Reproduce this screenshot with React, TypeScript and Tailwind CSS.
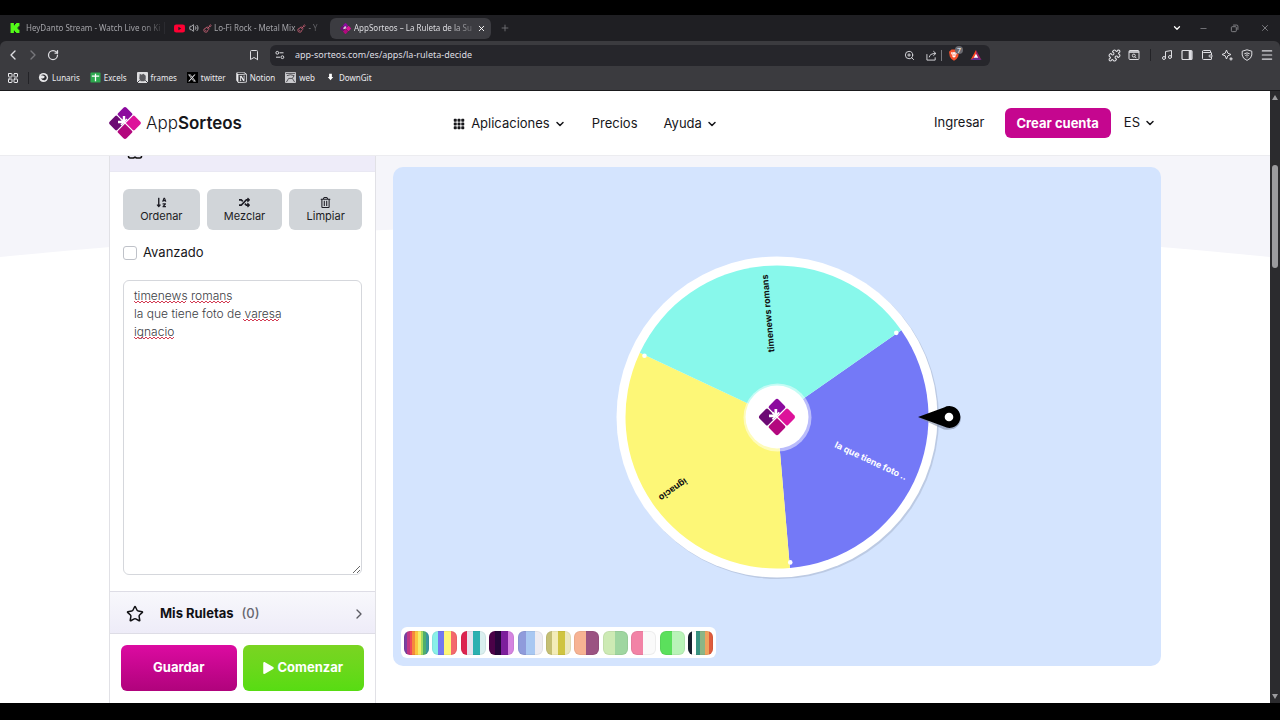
import type { ReactNode } from "react";
import {
  Bookmark,
  ChevronDown,
  ChevronLeft,
  ChevronRight,
  Guitar,
  LayoutGrid,
  Menu,
  Minus,
  Music,
  Plus,
  Puzzle,
  RotateCw,
  Star,
  Volume2,
  Wallet,
  X,
  ZoomIn,
} from "lucide-react";
import { BsGrid3X3GapFill } from "react-icons/bs";
import { FaPlay, FaRandom, FaRegTrashAlt, FaSortAlphaDown } from "react-icons/fa";
import { SiKick, SiNotion, SiX, SiYoutube } from "react-icons/si";

interface Segment {
  label: string;
  color: string;
  textColor: string;
  start: number;
}

const SEGMENTS: Segment[] = [
  { label: "la que tiene foto ..", color: "#7479f7", textColor: "#ffffff", start: -34.9 },
  { label: "ignacio", color: "#fdf777", textColor: "#111111", start: 85.1 },
  { label: "timenews romans", color: "#88f8eb", textColor: "#111111", start: 205.1 },
];

const PALETTES: string[][] = [
  ["#7b3fa0", "#c13584", "#ef4a5b", "#f58a3c", "#fbc740", "#f4ef6a", "#a6dc60", "#4fae6c", "#3a97a0"],
  ["#88f0e8", "#7479f0", "#fdf777", "#f4686c"],
  ["#dc2350", "#e6e3ee", "#2cb0b0", "#d9efef"],
  ["#4b0248", "#26063a", "#7d1f9c", "#d583e0"],
  ["#8f9bdb", "#a9c8f2", "#eeecf2"],
  ["#c5bf74", "#f3ecb8", "#cfc441", "#ece8bf"],
  ["#f7b393", "#9b5382"],
  ["#cdeab4", "#9fd6a0"],
  ["#f283a6", "#fafafa"],
  ["#5be05c", "#b9f3b8"],
  ["#17202e", "#ffffff", "#399382", "#8cb586", "#f0a25e", "#df5c3e"],
];

const ENTRIES = "timenews romans\nla que tiene foto de varesa\nignacio";

// Spell-check marks, measured from the text area's corner
const MISSPELLED = [
  { x: 11, y: 21, width: 52 },
  { x: 67, y: 21, width: 40 },
  { x: 120, y: 39, width: 36 },
  { x: 11, y: 57, width: 40 },
];

function point(angle: number, r: number) {
  const rad = (angle * Math.PI) / 180;
  return { x: r * Math.cos(rad), y: r * Math.sin(rad) };
}

function slicePath(start: number, r: number) {
  const a = point(start, r);
  const b = point(start + 120, r);
  return `M0 0L${a.x} ${a.y}A${r} ${r} 0 0 1 ${b.x} ${b.y}Z`;
}

function squiggle(x: number, y: number, width: number) {
  let d = `M${x} ${y}`;
  for (let i = 2; i <= width; i += 2) {
    d += `L${x + i} ${y + (i % 4 ? 2 : 0)}`;
  }
  return d;
}

function stripes(colors: string[]) {
  const step = 100 / colors.length;
  const stops = colors.map((c, i) => `${c} ${i * step}% ${(i + 1) * step}%`);
  return `linear-gradient(to right, ${stops.join(", ")})`;
}

function LogoShapes() {
  return (
    <>
      <g transform="rotate(45)">
        <path d="M-9.6 -11.8H-2Q-0.6 -11.8 -0.6 -10.4V-0.6H-10.4Q-11.8 -0.6 -11.8 -2V-9.6Q-11.8 -11.8 -9.6 -11.8Z" fill="#8c0a9e" />
        <path d="M9.6 -11.8H2Q0.6 -11.8 0.6 -10.4V-0.6H10.4Q11.8 -0.6 11.8 -2V-9.6Q11.8 -11.8 9.6 -11.8Z" fill="#dd129a" />
        <path d="M9.6 11.8H2Q0.6 11.8 0.6 10.4V0.6H10.4Q11.8 0.6 11.8 2V9.6Q11.8 11.8 9.6 11.8Z" fill="#b3087e" />
        <path d="M-9.6 11.8H-2Q-0.6 11.8 -0.6 10.4V0.6H-10.4Q-11.8 0.6 -11.8 2V9.6Q-11.8 11.8 -9.6 11.8Z" fill="#6c0a74" />
      </g>
      <path d="M-1 -0.5V-7M-0.5 -1H-7" stroke="#fff" strokeWidth="2.4" fill="none" />
      <path d="M-1 -1L-4 -4M-1 -1L2 -4M-1 -1L-4 2" stroke="#fff" strokeWidth="1.6" fill="none" />
    </>
  );
}

function Logo({ className }: { className: string }) {
  return (
    <svg viewBox="-16 -16 32 32" className={className} aria-hidden="true">
      <LogoShapes />
    </svg>
  );
}

function IconButton({ label, children }: { label: string; children: ReactNode }) {
  return (
    <button type="button" aria-label={label} className="flex h-3 w-3 shrink-0 items-center justify-center">
      {children}
    </button>
  );
}

function TabStrip() {
  return (
    <div className="flex h-[26px] items-center whitespace-nowrap bg-[#1f1f23] text-[8px] leading-3 text-[#a3a3a8]">
      <div className="flex w-[165px] items-center gap-[6px] border-r border-[#2b2b30] pl-[10px]">
        <SiKick className="h-[10px] w-[10px] shrink-0 text-[#53fc18]" />
        <span className="[mask-image:linear-gradient(to_right,#000_85%,#0004)]">
          HeyDanto Stream - Watch Live on Ki
        </span>
      </div>
      <div className="flex w-[165px] items-center gap-1 pl-[9px]">
        <SiYoutube className="h-[11px] w-[11px] shrink-0 text-[#ff0033]" />
        <Volume2 className="h-[10px] w-[10px] shrink-0 text-[#d0d0d4]" />
        <span className="flex items-center gap-[2px] [mask-image:linear-gradient(to_right,#000_85%,#0006)]">
          <Guitar className="h-[9px] w-[9px] shrink-0 text-[#d8687e]" />
          <span>Lo-Fi Rock - Metal Mix</span>
          <Guitar className="h-[9px] w-[9px] shrink-0 text-[#d8687e]" />
          <span>- Y</span>
        </span>
      </div>
      <div className="flex h-[21px] w-[161px] items-center justify-between rounded-md bg-[#3c3c41] pl-[10px] pr-1 text-[#dcdce0]">
        <span className="flex items-center gap-[3px]">
          <Logo className="h-[11px] w-[11px] shrink-0" />
          <span className="[mask-image:linear-gradient(to_right,#000_80%,#0004)]">
            AppSorteos – La Ruleta de la Su
          </span>
        </span>
        <IconButton label="Cerrar pestaña">
          <X className="h-[9px] w-[9px] text-white" strokeWidth={2.5} />
        </IconButton>
      </div>
      <div className="pl-2">
        <IconButton label="Nueva pestaña">
          <Plus className="h-[10px] w-[10px] text-[#77777c]" />
        </IconButton>
      </div>
      <div className="ml-auto flex items-center pr-[9px]">
        <IconButton label="Buscar pestañas">
          <ChevronDown className="h-[10px] w-[10px] text-white" strokeWidth={3} />
        </IconButton>
        <div className="ml-[14px] flex items-center gap-[19px] text-[#8b8b90]">
          <IconButton label="Minimizar">
            <Minus className="h-[9px] w-[9px]" />
          </IconButton>
          <IconButton label="Restaurar">
            <svg viewBox="0 0 10 10" className="h-[9px] w-[9px]" fill="none" stroke="currentColor">
              <rect x="1.5" y="3" width="5.5" height="5.5" rx="1" />
              <path d="M3.5 1.2H7.5Q8.8 1.2 8.8 2.5V6.5" />
            </svg>
          </IconButton>
          <IconButton label="Cerrar">
            <X className="h-[10px] w-[10px]" />
          </IconButton>
        </div>
      </div>
    </div>
  );
}

function AddressBar() {
  return (
    <div className="flex h-7 items-center pl-[7px] pr-[7px] text-[#dedee2]">
      <div className="flex w-[241px] shrink-0 items-center gap-2">
        <IconButton label="Atrás">
          <ChevronLeft className="h-4 w-4 shrink-0" />
        </IconButton>
        <IconButton label="Adelante">
          <ChevronRight className="h-4 w-4 shrink-0 text-[#77777c]" />
        </IconButton>
        <IconButton label="Recargar">
          <RotateCw className="h-3 w-3" strokeWidth={2.5} />
        </IconButton>
      </div>
      <div className="flex w-[742px] items-center gap-[10px]">
        <IconButton label="Guardar marcador">
          <Bookmark className="h-3 w-3" />
        </IconButton>
        <div className="flex h-[21px] flex-1 items-center gap-[10px] rounded-md bg-[#26262b] pl-[5px] pr-2">
          <svg viewBox="0 0 10 10" className="h-[10px] w-[10px]" fill="none" stroke="currentColor">
            <circle cx="2.3" cy="2.8" r="1.4" />
            <path d="M4.5 2.8H8.5M1 7.2H5" />
            <circle cx="7.4" cy="7.2" r="1.4" />
          </svg>
          <input
            type="text"
            aria-label="Dirección"
            defaultValue="app-sorteos.com/es/apps/la-ruleta-decide"
            className="min-w-0 flex-1 bg-transparent text-[9px] leading-3 outline-none"
          />
          <IconButton label="Zoom">
            <ZoomIn className="h-[11px] w-[11px]" />
          </IconButton>
          <div className="flex items-center gap-1">
            <IconButton label="Compartir">
              <svg viewBox="0 0 12 12" className="h-[11px] w-[11px]" fill="none" stroke="currentColor">
                <path d="M1 4.5V11H10V8M3.5 8Q4 3.8 10.5 3.8M8 1.3L10.8 3.8L8 6.3" />
              </svg>
            </IconButton>
            <span className="h-[11px] w-px bg-[#77777c]" />
          </div>
          <span className="relative -ml-1 flex">
            <svg viewBox="0 0 12 12" className="h-3 w-3">
              <path d="M3.5 0.5H8.5L9.8 1.8L11 2.8L10.2 7.5Q9.5 9.5 6 11.8Q2.5 9.5 1.8 7.5L1 2.8L2.2 1.8Z" fill="#f4512c" />
              <path d="M3 3.2L5 3.6L6 3L7 3.6L9 3.2L8.6 5.2L7.4 6L7.8 7.2L6 8.8L4.2 7.2L4.6 6L3.4 5.2Z" fill="#fff" />
              <path d="M4.2 4.8L5.4 5.2M7.8 4.8L6.6 5.2M6 5.4V7" stroke="#f4512c" strokeWidth="0.7" />
            </svg>
            <span className="absolute -right-[3px] -top-[3px] flex h-2 w-2 items-center justify-center rounded-sm bg-[#69696f] text-[7px] leading-none text-white">
              7
            </span>
          </span>
          <svg viewBox="0 0 12 12" className="h-3 w-3">
            <path d="M6 1L0.5 11L6 8Z" fill="#ff4724" />
            <path d="M6 1L11.5 11L6 8Z" fill="#9e1f63" />
            <path d="M0.5 11H11.5L6 7.5Z" fill="#662d91" />
            <path d="M6 4.8L3.8 8.8H8.2Z" fill="#fff" />
          </svg>
        </div>
      </div>
      <div className="ml-auto flex items-center gap-2">
        <IconButton label="Extensiones">
          <Puzzle className="h-[13px] w-[13px] shrink-0" />
        </IconButton>
        <IconButton label="Buscar en la página">
          <svg viewBox="0 0 12 12" className="h-3 w-3" fill="none" stroke="currentColor">
            <rect x="1" y="1.5" width="10" height="9" rx="1" />
            <path d="M1 3H11" strokeWidth="1.6" />
            <circle cx="5.8" cy="6.6" r="1.5" />
            <path d="M7 7.8L8.4 9.2" />
          </svg>
        </IconButton>
        <span className="mx-[2px] h-3 w-px bg-[#232327]" />
        <IconButton label="Multimedia">
          <Music className="h-3 w-3" />
        </IconButton>
        <IconButton label="Panel lateral">
          <svg viewBox="0 0 12 12" className="h-3 w-3" fill="none" stroke="currentColor">
            <rect x="1" y="1.5" width="10" height="9" rx="1" strokeWidth="1.2" />
            <path d="M9.2 2V10" strokeWidth="3" />
          </svg>
        </IconButton>
        <IconButton label="Cartera">
          <Wallet className="h-3 w-3" />
        </IconButton>
        <IconButton label="Asistente">
          <svg viewBox="0 0 12 12" className="h-3 w-3" fill="none" stroke="currentColor" strokeLinejoin="round">
            <path d="M5.5 1L6.8 4.2L10 5.5L6.8 6.8L5.5 10L4.2 6.8L1 5.5L4.2 4.2Z" />
            <path d="M10 8.2V11.4M8.4 9.8H11.6" strokeWidth="1.2" />
          </svg>
        </IconButton>
        <IconButton label="VPN">
          <svg viewBox="0 0 12 12" className="h-3 w-3" fill="none" stroke="currentColor">
            <path d="M6 0.8L10.8 2.2V6Q10.5 9.5 6 11.4Q1.5 9.5 1.2 6V2.2Z" />
            <path d="M3.3 4.8Q6 3 8.7 4.8M4.3 6.5Q6 5.2 7.7 6.5M5.5 8H6.5" />
          </svg>
        </IconButton>
        <IconButton label="Menú">
          <Menu className="h-[14px] w-[14px] shrink-0" />
        </IconButton>
      </div>
    </div>
  );
}

const BOOKMARKS: { name: string; icon: ReactNode }[] = [
  {
    name: "Lunaris",
    icon: (
      <svg viewBox="0 0 12 12" className="h-[11px] w-[11px]">
        <circle cx="6" cy="6" r="5" fill="#e8e8ea" />
        <path d="M3 3.5Q6 1.5 8.5 4T7.5 9Q4.5 9.5 3 6.5Q5.5 8 7 6T3 3.5Z" fill="#2c2c30" />
      </svg>
    ),
  },
  {
    name: "Excels",
    icon: (
      <svg viewBox="0 0 12 12" className="h-[11px] w-[11px]">
        <rect x="0.5" y="0.5" width="11" height="11" rx="1" fill="#2da94f" />
        <path d="M2 4.5H10M6 2V10" stroke="#fff" strokeWidth="1.4" />
      </svg>
    ),
  },
  {
    name: "frames",
    icon: (
      <svg viewBox="0 0 12 12" className="h-[11px] w-[11px]">
        <rect width="12" height="12" rx="1" fill="#dddddf" />
        <path d="M3 2L5 3L7 2L9.5 4V8L8 10H4L2.5 7Z" fill="#5a5a5e" />
        <path d="M0 12L3 9M12 12L9 9" stroke="#2c2c30" />
      </svg>
    ),
  },
  {
    name: "twitter",
    icon: (
      <span className="flex h-[11px] w-[11px] items-center justify-center bg-black">
        <SiX className="h-2 w-2" />
      </span>
    ),
  },
  { name: "Notion", icon: <SiNotion className="h-[11px] w-[11px]" /> },
  {
    name: "web",
    icon: (
      <svg viewBox="0 0 12 12" className="h-[11px] w-[11px]">
        <rect width="12" height="12" rx="1" fill="#c9c9cd" />
        <path d="M1 1.5H11M2 4L6 3L10 4L8 7L10.5 11M4 7L1.5 11M4 7H8" stroke="#4a4a4f" fill="none" />
      </svg>
    ),
  },
  {
    name: "DownGit",
    icon: (
      <svg viewBox="0 0 12 12" className="h-[11px] w-[11px]">
        <path d="M4.5 2H7.5V5.5H9L6 9L3 5.5H4.5Z" fill="#fff" />
      </svg>
    ),
  },
];

function BookmarksBar() {
  return (
    <nav aria-label="Marcadores" className="flex h-[21px] items-center pb-1 pl-[7px] text-[8px] leading-3 text-[#ececef]">
      <IconButton label="Todos los marcadores">
        <LayoutGrid className="h-3 w-3" />
      </IconButton>
      <span className="ml-[9px] h-3 w-px bg-[#232327]" />
      <div className="ml-[9px] flex gap-[10px]">
        {BOOKMARKS.map((b) => (
          <a key={b.name} href="#" className="flex items-center gap-[3px]">
            {b.icon}
            {b.name}
          </a>
        ))}
      </div>
    </nav>
  );
}

function SiteHeader() {
  return (
    <header className="relative z-10 flex h-[65px] shrink-0 justify-center border-b border-[#ececf0] bg-white text-[13px] text-[#16161a]">
      <div className="flex w-full max-w-[1052px] items-center justify-between pr-[5px]">
        <a href="#" className="flex w-[344px] items-center gap-[5px] text-[17px] leading-6">
          <Logo className="h-8 w-8" />
          <span className="font-light">
            App<span className="font-semibold">Sorteos</span>
          </span>
        </a>
        <nav className="flex items-center gap-[26px] pt-[2px]">
          <button type="button" className="flex items-center gap-[6px]">
            <BsGrid3X3GapFill className="h-3 w-3" />
            Aplicaciones
            <ChevronDown className="-ml-[2px] h-3 w-3" strokeWidth={3} />
          </button>
          <a href="#">Precios</a>
          <button type="button" className="flex items-center gap-1">
            Ayuda
            <ChevronDown className="h-3 w-3" strokeWidth={3} />
          </button>
        </nav>
        <div className="flex w-[438px] items-center justify-end">
          <a href="#">Ingresar</a>
          <button type="button" className="ml-5 rounded-md bg-[#c5068f] px-3 py-[5px] font-bold leading-5 text-white">
            Crear cuenta
          </button>
          <button type="button" className="ml-[13px] flex items-center gap-1">
            ES
            <ChevronDown className="h-3 w-3" strokeWidth={3} />
          </button>
        </div>
      </div>
    </header>
  );
}

function ToolButton({ icon, label }: { icon: ReactNode; label: string }) {
  return (
    <button
      type="button"
      className="flex h-[41px] flex-auto flex-col items-center justify-center rounded-md bg-[#d1d5d9] text-[11px] leading-[14px] text-[#1c1c24]"
    >
      {icon}
      {label}
    </button>
  );
}

function Sidebar() {
  return (
    <aside className="flex w-[267px] shrink-0 flex-col border-x border-[#e1e1e6] bg-white">
      <div className="h-4 shrink-0 overflow-hidden border-b border-[#e9e8f3] bg-[#eeecf9] pl-[17px]">
        <svg viewBox="0 0 16 4" className="h-1 w-4">
          <path d="M1.5 0Q1.5 2 3 2H6.5L8 1.2L9.5 2H13Q14.5 2 14.5 0" stroke="#111" strokeWidth="1.6" fill="none" />
        </svg>
      </div>
      <div className="flex flex-1 flex-col px-[13px] pt-[17px]">
        <div className="flex gap-[7px]">
          <ToolButton icon={<FaSortAlphaDown className="my-[1px] h-[11px] w-[11px]" />} label="Ordenar" />
          <ToolButton icon={<FaRandom className="my-[1px] h-[11px] w-[11px]" />} label="Mezclar" />
          <ToolButton icon={<FaRegTrashAlt className="my-[1px] h-[11px] w-[11px]" />} label="Limpiar" />
        </div>
        <label className="mt-3 flex items-center gap-[6px] text-[13px] leading-5 text-[#16161a]">
          <input
            type="checkbox"
            className="mt-[2px] h-[14px] w-[14px] appearance-none rounded-[3px] border border-[#bfc2c9] bg-white"
          />
          Avanzado
        </label>
        <div className="relative mb-4 mt-[18px] flex flex-1">
          <textarea
            aria-label="Participantes"
            spellCheck={false}
            defaultValue={ENTRIES}
            className="w-full resize rounded-md border border-[#d5d7dc] bg-white px-[10px] py-[6px] text-[12px] font-light leading-[18px] text-[#3b3d44] outline-none"
          />
          <svg className="pointer-events-none absolute left-0 top-0 h-16 w-full" aria-hidden="true">
            {MISSPELLED.map((m) => (
              <path key={`${m.x}-${m.y}`} d={squiggle(m.x, m.y, m.width)} stroke="#d33a52" fill="none" />
            ))}
          </svg>
        </div>
      </div>
      <button
        type="button"
        className="flex h-[43px] shrink-0 items-center border-y border-[#dedde6] bg-linear-to-b from-[#f8f8fc] to-[#eeecf8] pl-4 pr-2 pt-[2px] text-[13px] text-[#111114]"
      >
        <Star className="h-[18px] w-[18px]" />
        <span className="ml-4 font-bold">Mis Ruletas</span>
        <span className="ml-2 font-medium text-[#66666e]">(0)</span>
        <ChevronRight className="ml-auto h-4 w-4 text-[#5b5b63]" />
      </button>
      <div className="flex shrink-0 gap-[6px] px-[11px] pb-3 pt-[11px] text-[13px] font-bold text-white">
        <button
          type="button"
          className="h-[46px] flex-[116] rounded-md bg-linear-to-b from-[#dc0ba1] to-[#b0037c]"
        >
          Guardar
        </button>
        <button
          type="button"
          className="flex h-[46px] flex-[122] items-center justify-center gap-[3px] rounded-md bg-linear-to-b from-[#7ad422] to-[#57dc12]"
        >
          <FaPlay className="h-3 w-[11px]" />
          Comenzar
        </button>
      </div>
    </aside>
  );
}

function Wheel() {
  return (
    <svg viewBox="-175 -175 370 350" className="h-[350px] w-[370px]" role="img" aria-label="Ruleta">
      <circle cx="1.5" cy="1.5" r="160.5" fill="#bccae3" />
      <circle r="160.5" fill="#ffffff" />
      {SEGMENTS.map((s) => (
        <path key={s.label} d={slicePath(s.start, 151.5)} fill={s.color} />
      ))}
      {SEGMENTS.map((s) => {
        const pin = point(s.start - 0.3, 146);
        return <circle key={s.label} cx={pin.x} cy={pin.y} r="2.3" fill="#fff" />;
      })}
      {SEGMENTS.map((s) => (
        <text
          key={s.label}
          x="143"
          y="3"
          textAnchor="end"
          fill={s.textColor}
          transform={`rotate(${s.start + 60})`}
          className="text-[9px] font-bold"
        >
          {s.label}
        </text>
      ))}
      <circle cx="0.5" cy="0.5" r="34" fill="#ffffff" fillOpacity="0.5" />
      <circle r="31.5" fill="#ffffff" />
      <g transform="scale(1.14)">
        <LogoShapes />
      </g>
      <path d="M142 1L167 -9Q183 -11 184 2Q182 14 167 12.5Z" fill="#7f8ba3" fillOpacity="0.6" />
      <path d="M141 0L167 -9.6A11 11 0 1 1 167 9.6Z" fill="#000" />
      <circle cx="172" cy="0" r="4.3" fill="#fff" />
    </svg>
  );
}

function WheelPanel() {
  return (
    <section className="mb-[37px] mt-[11px] flex flex-1 flex-col rounded-[10px] bg-[#d4e4fe] px-2 pb-2">
      <div className="flex flex-1 items-center justify-center pl-5 pt-[39px]">
        <Wheel />
      </div>
      <div className="flex h-[31px] w-[315px] shrink-0 items-center justify-between rounded-md bg-white px-[3px]">
        {PALETTES.map((colors, i) => (
          <button
            key={colors[0]}
            type="button"
            aria-label={`Paleta ${i + 1}`}
            className="h-6 w-[25px] rounded-md border border-black/5 bg-origin-border"
            style={{ backgroundImage: stripes(colors) }}
          />
        ))}
      </div>
    </section>
  );
}

function Scrollbar() {
  return (
    <div className="flex w-[10px] shrink-0 flex-col items-center bg-[#2b2b2e] py-1" aria-hidden="true">
      <svg viewBox="0 0 6 5" className="h-[5px] w-[6px]">
        <path d="M3 0L6 5H0Z" fill="#9b9b9e" />
      </svg>
      <div className="mt-[65px] h-[103px] w-[6px] rounded-full bg-[#9b9b9e]" />
      <svg viewBox="0 0 6 5" className="mt-auto h-[5px] w-[6px]">
        <path d="M0 0H6L3 5Z" fill="#9b9b9e" />
      </svg>
    </div>
  );
}

export default function App() {
  return (
    <div className="flex h-screen flex-col overflow-hidden bg-black pb-[17px] pt-[15px] font-['Inter',sans-serif]">
      <div className="shrink-0 bg-[#1f1f23] font-['Noto_Sans',sans-serif]">
        <TabStrip />
        <div className="rounded-t-md border-b border-[#1a1a1d] bg-[#3b3b3f]">
          <AddressBar />
          <BookmarksBar />
        </div>
      </div>
      <div className="flex min-h-0 flex-1">
        <div className="flex min-w-0 flex-1 flex-col bg-white">
          <SiteHeader />
          <main className="relative flex min-h-0 flex-1 justify-center">
            <svg
              viewBox="0 0 1270 102"
              preserveAspectRatio="none"
              className="absolute left-0 top-0 h-[102px] w-full"
              aria-hidden="true"
            >
              <path d="M0 0H1270V101Q635 37 0 101Z" fill="#f5f5fa" />
            </svg>
            <div className="relative flex w-full max-w-[1052px] gap-[17px]">
              <Sidebar />
              <WheelPanel />
            </div>
          </main>
        </div>
        <Scrollbar />
      </div>
    </div>
  );
}
